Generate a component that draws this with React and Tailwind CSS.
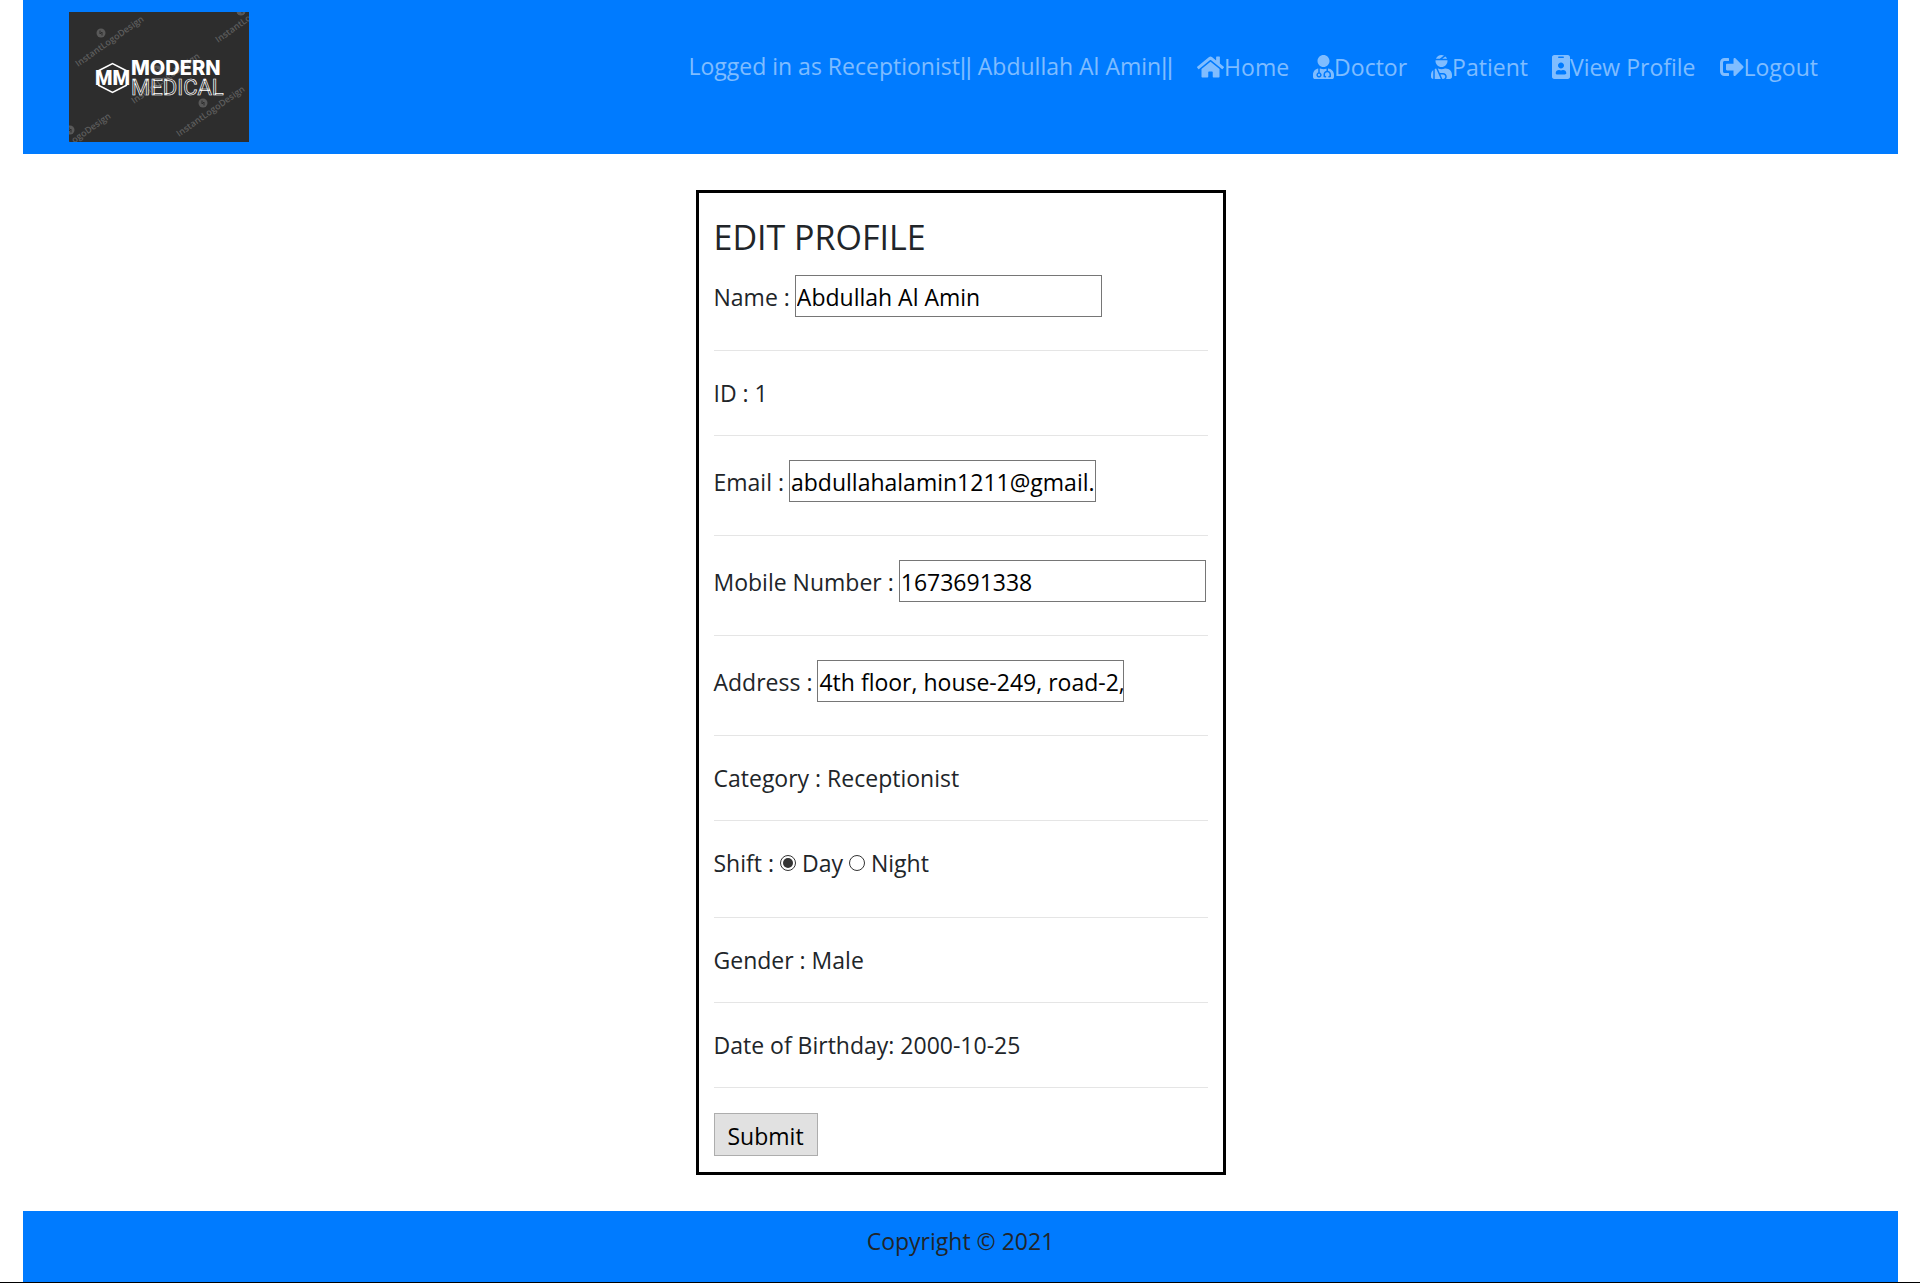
import { FaHome, FaUserMd, FaUserInjured, FaIdBadge, FaSignOutAlt } from "react-icons/fa";

const watermarks = [
  [9, 55],
  [149, 31],
  [65, 92],
  [110, 125],
  [-24, 152],
];

const badges = [
  [32, 21],
  [172, -1],
  [88, 58],
  [134, 91],
  [1, 118],
];

function Logo() {
  return (
    <svg viewBox="0 0 180 130" className="h-[130px] w-[180px]" role="img" aria-label="Modern Medical">
      <rect width="180" height="130" fill="#2d2d2d" />
      <g fill="#5e5e5e" fontFamily="Open Sans, sans-serif" fontSize="9" fontWeight="600">
        {watermarks.map(([x, y]) => (
          <text key={`${x}-${y}`} transform={`translate(${x} ${y}) rotate(-35)`}>
            InstantLogoDesign
          </text>
        ))}
      </g>
      {badges.map(([x, y]) => (
        <g key={`${x}-${y}`} transform={`translate(${x} ${y})`}>
          <circle r="4.5" fill="#595959" />
          <path d="M-1 -2.5V1L1 -1V2.5" fill="none" stroke="#2d2d2d" strokeWidth="1" />
        </g>
      ))}
      <path d="M29 59L43.5 51.5L58 59M29 73L43.5 80.5L58 73" fill="none" stroke="#fff" strokeWidth="1.5" />
      <text x="26" y="73" fill="#fff" fontFamily="Roboto, sans-serif" fontWeight="900" fontSize="20">
        MM
      </text>
      <text x="62" y="63" fill="#fff" fontFamily="Inter, sans-serif" fontWeight="800" fontSize="20">
        MODERN
      </text>
      <text x="62" y="83" fill="#2d2d2d" stroke="#fff" strokeWidth="0.7" fontFamily="Roboto, sans-serif" fontSize="22">
        MEDICAL
      </text>
    </svg>
  );
}

const links = [
  { label: "Home", Icon: FaHome, size: "h-6 w-[27px]" },
  { label: "Doctor", Icon: FaUserMd, size: "h-6 w-[21px]" },
  { label: "Patient", Icon: FaUserInjured, size: "h-6 w-[21px]" },
  { label: "View Profile", Icon: FaIdBadge, size: "h-6 w-[18px]" },
  { label: "Logout", Icon: FaSignOutAlt, size: "h-6 w-6" },
];

function Bars() {
  return <span className="font-['Liberation_Sans',sans-serif]">||</span>;
}

function Header() {
  return (
    <header className="flex items-start justify-between bg-[#007bff] py-3 pr-20 pl-[46px]">
      <a href="#home">
        <Logo />
      </a>
      <nav className="flex items-center gap-6 pt-9 leading-9 whitespace-nowrap text-white/50">
        <span>
          Logged in as Receptionist
          <Bars /> Abdullah Al Amin
          <Bars />
        </span>
        {links.map(({ label, Icon, size }) => (
          <a key={label} href={"#" + label} className="flex items-center">
            <Icon className={size} />
            {label}
          </a>
        ))}
      </nav>
    </header>
  );
}

function TextRow({ id, label, value }) {
  return (
    <div className="flex h-[100px] items-start gap-[5px] border-b border-black/10 pt-6">
      <label htmlFor={id} className="leading-[44px] whitespace-nowrap">
        {label} :
      </label>
      <input
        id={id}
        type="text"
        defaultValue={value}
        className="h-[42px] w-[307px] border border-[#767676] bg-white pt-[2px] pl-px text-black"
      />
    </div>
  );
}

function InfoRow({ children }) {
  return <p className="border-b border-black/10 py-6 leading-9">{children}</p>;
}

function Radio({ label, checked }) {
  return (
    <label className="flex items-center gap-[6px]">
      <input
        type="radio"
        name="shift"
        defaultChecked={checked}
        className="size-4 appearance-none rounded-full border border-[#333] bg-white bg-clip-content p-[2px] checked:bg-[#333]"
      />
      {label}
    </label>
  );
}

export default function App() {
  return (
    <div className="min-h-screen border-b border-black bg-white pr-[22px] pl-[23px] font-['Open_Sans',sans-serif] text-[23px] text-[#212529]">
      <Header />
      <main className="flex justify-center py-9">
        <form className="w-full max-w-[530px] border-[3px] border-black px-[15px] pt-6 pb-4">
          <h2 className="text-[34px] leading-[40px]">EDIT PROFILE</h2>
          <div className="-mt-[6px]">
            <TextRow id="name" label="Name" value="Abdullah Al Amin" />
          </div>
          <InfoRow>ID : 1</InfoRow>
          <TextRow id="email" label="Email" value="abdullahalamin1211@gmail.com" />
          <TextRow id="mobile" label="Mobile Number" value="1673691338" />
          <TextRow id="address" label="Address" value="4th floor, house-249, road-2, Dhaka" />
          <InfoRow>Category : Receptionist</InfoRow>
          <div className="flex items-center gap-[6px] border-b border-black/10 pt-6 pb-9 leading-9">
            Shift :
            <Radio label="Day" checked />
            <Radio label="Night" />
          </div>
          <InfoRow>Gender : Male</InfoRow>
          <InfoRow>Date of Birthday: 2000-10-25</InfoRow>
          <button type="submit" className="mt-[25px] h-[43px] border border-[#adadad] bg-[#e1e1e1] px-[13px] pt-[3px] text-black">
            Submit
          </button>
        </form>
      </main>
      <footer className="bg-[#007bff] pt-3 pb-[23px] text-center leading-9">Copyright © 2021</footer>
    </div>
  );
}
